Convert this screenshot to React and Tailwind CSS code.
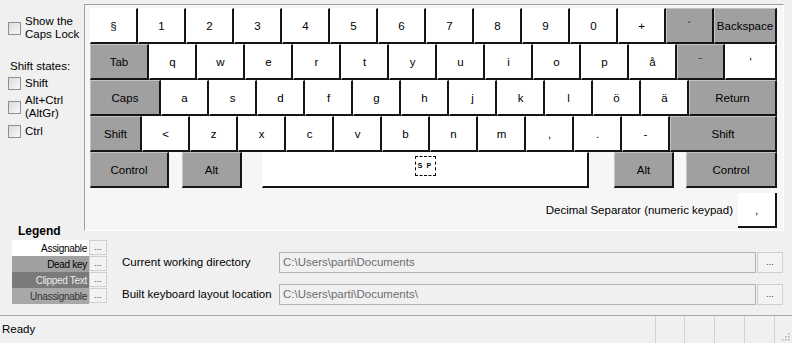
const font = { fontFamily: '"Liberation Sans", Arial, sans-serif' };

const rows = [
  [
    ["§", 48], ["1", 48], ["2", 48], ["3", 48], ["4", 48], ["5", 48], ["6", 48],
    ["7", 48], ["8", 48], ["9", 48], ["0", 48], ["+", 48], ["´", 48, true], ["Backspace", 63, true],
  ],
  [
    ["Tab", 59, true], ["q", 48], ["w", 48], ["e", 48], ["r", 48], ["t", 48], ["y", 48],
    ["u", 48], ["i", 48], ["o", 48], ["p", 48], ["å", 48], ["¨", 48, true], ["'", 52],
  ],
  [
    ["Caps", 71, true], ["a", 48], ["s", 48], ["d", 48], ["f", 48], ["g", 48], ["h", 48],
    ["j", 48], ["k", 48], ["l", 48], ["ö", 48], ["ä", 48], ["Return", 88, true],
  ],
  [
    ["Shift", 52, true], ["<", 48], ["z", 48], ["x", 48], ["c", 48], ["v", 48], ["b", 48],
    ["n", 48], ["m", 48], [",", 48], [".", 48], ["-", 48], ["Shift", 107, true],
  ],
];

function Key({ label, width, dark, className = "", children }) {
  return (
    <div
      className={`flex h-[36px] shrink-0 items-center justify-center border-b-2 border-r-2 border-b-[#151515] border-r-[#151515] border-l border-t pt-[3px] text-[11.5px] text-black ${
        dark ? "border-l-[#c4c4c4] border-t-[#c4c4c4] bg-[#a0a0a0]" : "border-l-white border-t-white bg-white"
      } ${className}`}
      style={{ width }}
    >
      {children ?? label}
    </div>
  );
}

function CheckBox() {
  return <span className="block h-[13px] w-[13px] shrink-0 border border-[#8e8f8f] bg-gradient-to-br from-[#dcdcdc] to-[#f8f8f8]" />;
}

function Sidebar() {
  return (
    <div className="flex h-[238px] w-[84px] shrink-0 flex-col pl-[8px] text-[11.5px] leading-[13px] text-black">
      <label className="mt-[15px] flex items-center gap-[4px]">
        <CheckBox />
        <span>
          Show the
          <br />
          Caps Lock
        </span>
      </label>
      <div className="ml-[2px] mt-[19px]">Shift states:</div>
      <label className="mt-[4px] flex items-center gap-[4px]">
        <CheckBox />
        <span>Shift</span>
      </label>
      <label className="mt-[4px] flex items-center gap-[4px]">
        <CheckBox />
        <span>
          Alt+Ctrl
          <br />
          (AltGr)
        </span>
      </label>
      <label className="mt-[5px] flex items-center gap-[4px]">
        <CheckBox />
        <span>Ctrl</span>
      </label>
      <div className="ml-[10px] mt-auto text-[12px] font-bold leading-[14px]">Legend</div>
    </div>
  );
}

function KeyboardPanel() {
  return (
    <div className="mt-[4px] flex h-[227px] w-[700px] flex-col border-l border-t border-b border-r border-l-[#a0a0a0] border-t-[#a0a0a0] border-b-white border-r-white bg-[#f6f6f6] pl-[5px] pt-[3px]">
      {rows.map((row, i) => (
        <div className="flex" key={i}>
          {row.map(([label, width, dark], j) => (
            <Key key={j} label={label} width={width} dark={dark} />
          ))}
        </div>
      ))}
      <div className="flex">
        <Key label="Control" width={79} dark />
        <Key label="Alt" width={60} dark className="ml-[13px]" />
        <Key width={327} className="ml-[20px]">
          <span className="-mt-[10px] flex h-[20px] w-[21px] items-center justify-center border border-dashed border-black text-[7px] font-bold tracking-[1px]">
            S P
          </span>
        </Key>
        <Key label="Alt" width={60} dark className="ml-[25px]" />
        <Key label="Control" width={91} dark className="ml-[12px]" />
      </div>
      <div className="mt-[5px] flex w-[687px] items-center justify-end gap-[5px]">
        <span className="text-[11.5px] text-black">Decimal Separator (numeric keypad)</span>
        <div className="flex h-[35px] w-[39px] items-center justify-center border-b-2 border-r-2 border-b-[#151515] border-r-[#151515] bg-white pt-[3px] text-[11.5px]">
          ,
        </div>
      </div>
    </div>
  );
}

const legend = [
  ["Assignable", "bg-white text-black"],
  ["Dead key", "bg-[#a0a0a0] text-black"],
  ["Clipped Text", "bg-[#7a7a7a] text-[#ececec]"],
  ["Unassignable", "bg-[#a8a8a8] text-[#333333]"],
];

function DotsButton({ className = "" }) {
  return (
    <span className={`flex items-center justify-center border border-[#cfcfcf] bg-[#f3f3f3] text-[9px] leading-none text-[#333] ${className}`}>
      ...
    </span>
  );
}

function PathField({ label, value }) {
  return (
    <div className="flex h-[21px] items-center">
      <span className="w-[157px] shrink-0 text-[11.5px] text-black">{label}</span>
      <div className="flex h-[21px] w-[477px] items-center border border-[#b2b2b2] bg-[#f0f0f0] pl-[3px] text-[11.5px] text-[#6d6d6d]">
        {value}
      </div>
      <DotsButton className="ml-[1px] h-[21px] w-[26px]" />
    </div>
  );
}

function StatusBar() {
  return (
    <div className="flex h-[28px] border-t border-t-[#a8a8a8] bg-[#f0f0f0] text-[11.5px] text-black">
      <div className="flex w-[655px] items-center pl-[2px]">Ready</div>
      <div className="w-[29px] border-l border-l-[#d2d2d2]" />
      <div className="w-[30px] border-l border-l-[#d2d2d2]" />
      <div className="w-[30px] border-l border-l-[#d2d2d2]" />
      <div className="w-[30px] border-l border-l-[#d2d2d2]" />
      <div className="flex flex-1 items-end justify-end border-l border-l-[#d2d2d2] pb-[2px] pr-[2px]">
        <svg width="10" height="10" viewBox="0 0 10 10">
          {[
            [8, 2], [8, 5], [5, 5], [8, 8], [5, 8], [2, 8],
          ].map(([x, y], i) => (
            <rect key={i} x={x} y={y} width="1.5" height="1.5" fill="#b0b0b0" />
          ))}
        </svg>
      </div>
    </div>
  );
}

export default function App() {
  return (
    <div className="flex h-[343px] w-[792px] flex-col overflow-hidden bg-[#f0f0f0]" style={font}>
      <div className="flex items-start">
        <Sidebar />
        <KeyboardPanel />
      </div>
      <div className="flex h-[77px]">
        <div className="ml-[12px] flex flex-col pt-[2px]">
          {legend.map(([name, cls]) => (
            <div className="flex h-[16px]" key={name}>
              <span className={`flex w-[77px] items-center justify-end pr-[2px] text-[10px] tracking-[-0.3px] ${cls}`}>{name}</span>
              <DotsButton className="h-[15px] w-[18px]" />
            </div>
          ))}
        </div>
        <div className="ml-[15px] flex flex-col gap-[11px] pt-[14px]">
          <PathField label="Current working directory" value="C:\Users\parti\Documents" />
          <PathField label="Built keyboard layout location" value="C:\Users\parti\Documents\" />
        </div>
      </div>
      <StatusBar />
    </div>
  );
}
